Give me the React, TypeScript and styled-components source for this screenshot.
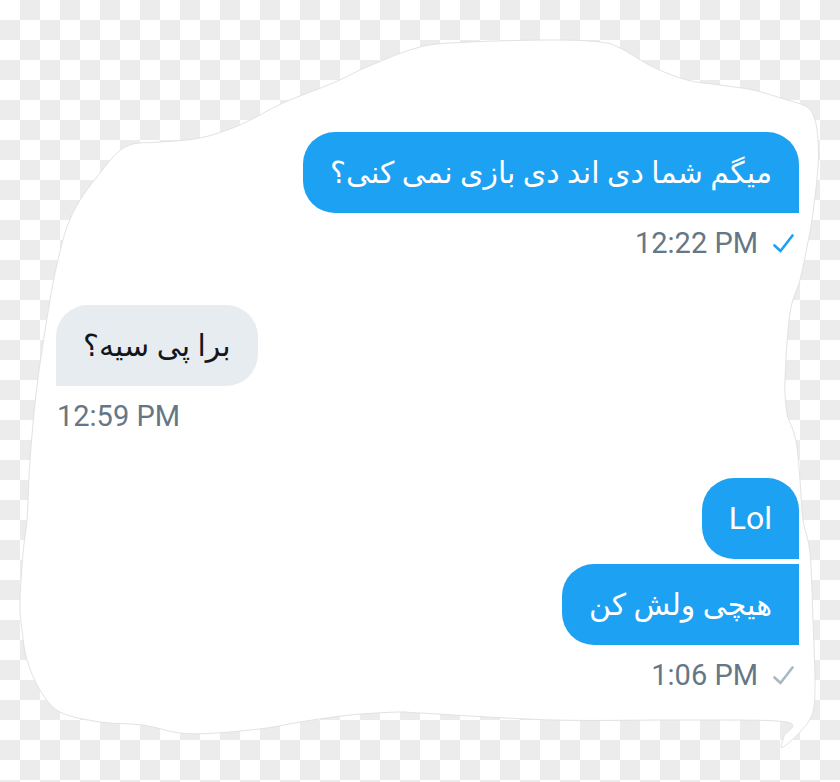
import React from 'react'
import styled, { createGlobalStyle } from 'styled-components'

const GlobalStyle = createGlobalStyle`
    html, body {
        margin: 0;
        padding: 0;
    }
    body {
        background: repeating-conic-gradient(#ececec 0 25%, #ffffff 0 50%) 0 0 / 40px 40px;
        font-family: Roboto, "DejaVu Sans", sans-serif;
    }
`

const Stage = styled.div`
    position: relative;
    width: 840px;
    height: 782px;
    overflow: hidden;
`

const Blob = styled.svg`
    position: absolute;
    left: 0;
    top: 0;
    width: 840px;
    height: 782px;
`

const Thread = styled.div`
    position: relative;
    display: flex;
    flex-direction: column;
    gap: 44px;
    padding: 132px 41px 0 56px;
`

const Group = styled.div<{ $side: 'in' | 'out' }>`
    display: flex;
    flex-direction: column;
    align-items: ${(p) => (p.$side === 'out' ? 'flex-end' : 'flex-start')};
    gap: 5px;
`

type Shape = 'single' | 'last'

const radiusFor = (side: 'in' | 'out', shape: Shape) => {
    if (side === 'in') return '32px 32px 32px 0'
    if (shape === 'last') return '32px 0 0 32px'
    return '32px 32px 0 32px'
}

const Bubble = styled.div<{ $side: 'in' | 'out'; $shape: Shape; $rtl?: boolean }>`
    font-size: ${(p) => (p.$rtl ? '30px' : '32px')};
    line-height: 41px;
    padding: 20px 27px;
    background: ${(p) => (p.$side === 'out' ? '#1da1f2' : '#e6ecf0')};
    color: ${(p) => (p.$side === 'out' ? '#ffffff' : '#14171a')};
    border-radius: ${(p) => radiusFor(p.$side, p.$shape)};
    white-space: nowrap;
`

const Meta = styled.div<{ $side: 'in' | 'out' }>`
    display: flex;
    align-items: center;
    gap: 15px;
    margin-top: 7px;
    padding-right: ${(p) => (p.$side === 'out' ? '5px' : '0')};
    padding-left: ${(p) => (p.$side === 'in' ? '1px' : '0')};
    font-size: 29px;
    line-height: 36px;
    color: #657786;
`

const Check = ({ color }: { color: string }) => (
    <svg width="21" height="19" viewBox="0 0 21 19" fill="none">
        <polyline points="1.5,11.5 7.5,17 19.5,1.5" stroke={color} strokeWidth="2.6" strokeLinecap="round" strokeLinejoin="round" />
    </svg>
)

// outline of the torn white paper, traced from the screenshot
const outline: [number, number][] = [
    [58, 260], [67, 227], [80, 200], [100, 173], [117, 153], [133, 144], [160, 142], [200, 138],
    [240, 125], [283, 103], [333, 83], [367, 67], [420, 47], [470, 42], [553, 40], [600, 42],
    [620, 48], [653, 67], [687, 80], [720, 85], [753, 90], [787, 100], [807, 107], [815, 120],
    [818, 140], [818, 167], [813, 213], [807, 247], [800, 280], [790, 313], [785, 380], [787, 413],
    [793, 430], [797, 447], [800, 480], [803, 520], [810, 553], [813, 620], [815, 687], [812, 715],
    [800, 732], [786, 745], [781, 747], [784, 736], [786, 722], [687, 720], [553, 720], [420, 713],
    [400, 712], [350, 715], [300, 722], [267, 728], [217, 733], [180, 733], [143, 725], [100, 722],
    [60, 712], [40, 690], [27, 660], [22, 630], [20, 603], [23, 553], [27, 520], [30, 460],
    [37, 386], [50, 300],
]

const smoothPath = (pts: [number, number][]) => {
    const n = pts.length
    let d = `M ${pts[0][0]} ${pts[0][1]}`
    for (let i = 0; i < n; i++) {
        const p0 = pts[(i - 1 + n) % n]
        const p1 = pts[i]
        const p2 = pts[(i + 1) % n]
        const p3 = pts[(i + 2) % n]
        const c1x = p1[0] + (p2[0] - p0[0]) / 6
        const c1y = p1[1] + (p2[1] - p0[1]) / 6
        const c2x = p2[0] - (p3[0] - p1[0]) / 6
        const c2y = p2[1] - (p3[1] - p1[1]) / 6
        d += ` C ${c1x.toFixed(1)} ${c1y.toFixed(1)} ${c2x.toFixed(1)} ${c2y.toFixed(1)} ${p2[0]} ${p2[1]}`
    }
    return d + ' Z'
}

const App = () => {
    return (
        <>
            <GlobalStyle />
            <Stage>
                <Blob viewBox="0 0 840 782">
                    <path d={smoothPath(outline)} fill="#ffffff" stroke="#e2e2e2" strokeWidth="1" />
                </Blob>
                <Thread>
                    <Group $side="out">
                        <Bubble $side="out" $shape="single" $rtl dir="rtl">میگم شما دی اند دی بازی نمی کنی؟</Bubble>
                        <Meta $side="out">
                            <span>12:22 PM</span>
                            <Check color="#1da1f2" />
                        </Meta>
                    </Group>
                    <Group $side="in">
                        <Bubble $side="in" $shape="single" $rtl dir="rtl">برا پی سیه؟</Bubble>
                        <Meta $side="in">
                            <span>12:59 PM</span>
                        </Meta>
                    </Group>
                    <Group $side="out">
                        <Bubble $side="out" $shape="single">Lol</Bubble>
                        <Bubble $side="out" $shape="last" $rtl dir="rtl">هیچی ولش کن</Bubble>
                        <Meta $side="out">
                            <span>1:06 PM</span>
                            <Check color="#aab8c2" />
                        </Meta>
                    </Group>
                </Thread>
            </Stage>
        </>
    )
}

export default App
